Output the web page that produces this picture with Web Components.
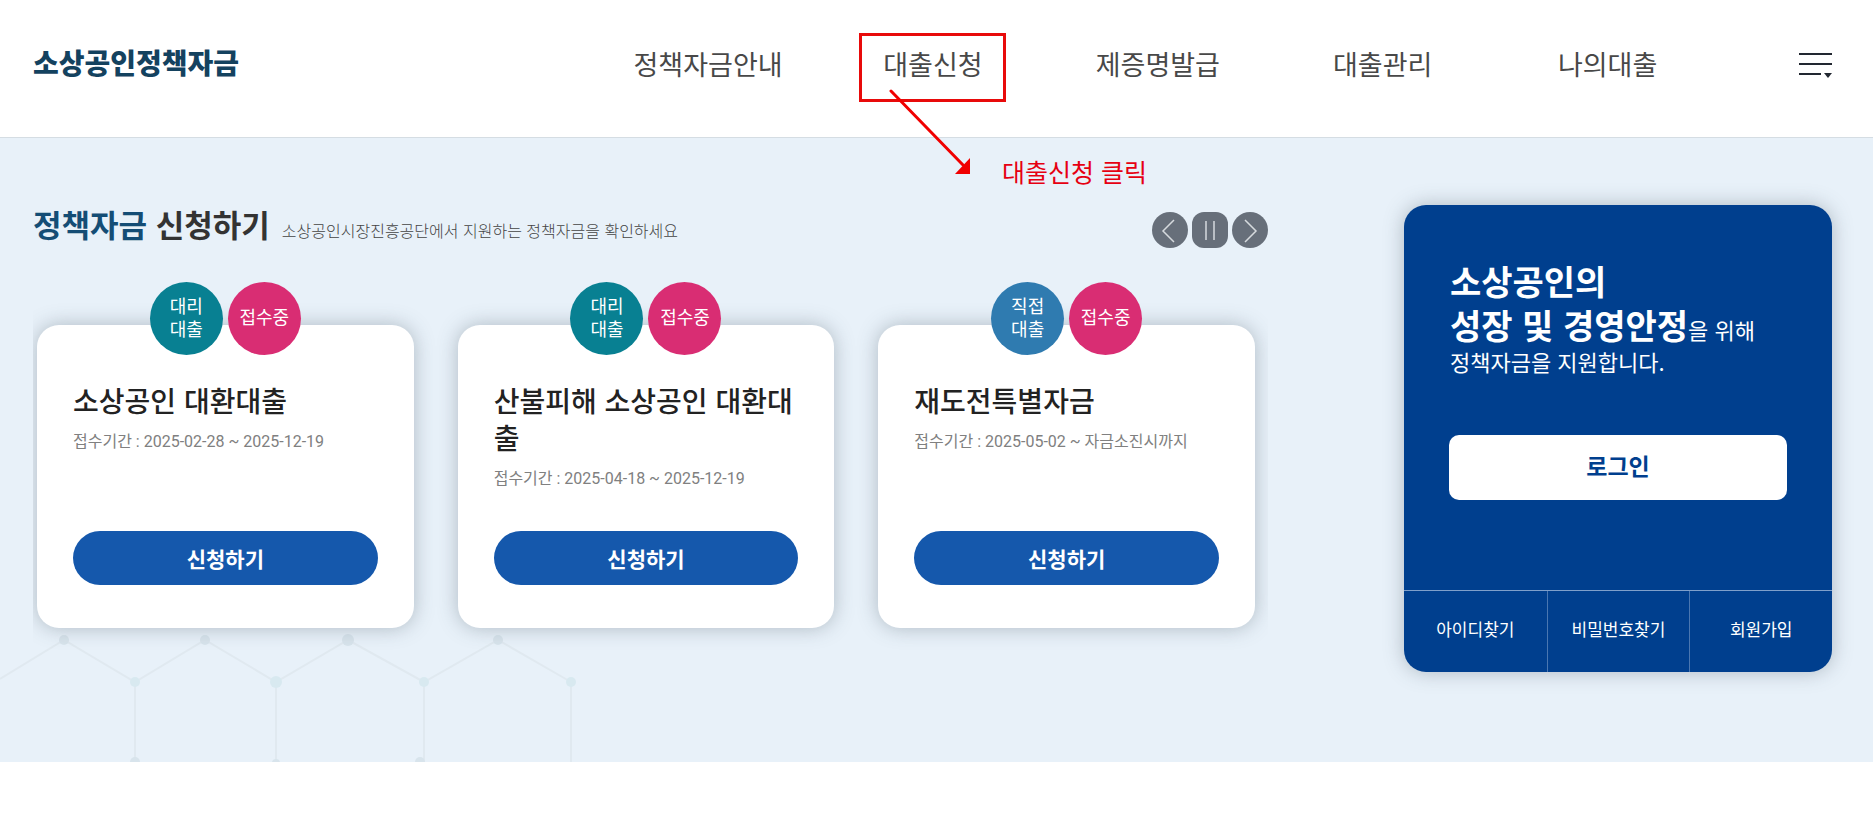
<!DOCTYPE html>
<html lang="ko">
<head>
<meta charset="utf-8">
<meta name="viewport" content="width=device-width, initial-scale=1">
<title>소상공인정책자금</title>
<style>
	body {
		margin: 0;
		background: #fff;
		color: #222;
		font-family: "Noto Sans CJK KR", "Noto Sans", sans-serif;
	}
</style>
</head>
<body>
<site-header>
	<nav-item>정책자금안내</nav-item>
	<nav-item>대출신청<click-callout slot="callout">대출신청 클릭</click-callout></nav-item>
	<nav-item>제증명발급</nav-item>
	<nav-item>대출관리</nav-item>
	<nav-item>나의대출</nav-item>
</site-header>
<main-visual>
	<fund-slider>
		<fund-card kind="대리 대출" period="2025-02-28 ~ 2025-12-19">소상공인 대환대출</fund-card>
		<fund-card kind="대리 대출" period="2025-04-18 ~ 2025-12-19">산불피해 소상공인 대환대출</fund-card>
		<fund-card kind="직접 대출" color="#2f7bb0" period="2025-05-02 ~ 자금소진시까지">재도전특별자금</fund-card>
	</fund-slider>
	<login-box slot="side"></login-box>
</main-visual>

<script>
class SiteHeader extends HTMLElement {
    constructor() {
        super();
        const shadowRoot = this.attachShadow({ mode: 'open' });
        shadowRoot.innerHTML = `
			<style>
				:host {
					display: block;
					border-bottom: 1px solid #d5dde3;
				}
				header {
					display: flex;
					align-items: center;
					box-sizing: border-box;
					min-height: 137px;
					padding: 0 41px 10px 33px;
				}
				.logo {
					padding-bottom: 4px;
					color: #14425f;
					font-size: 28px;
					font-weight: 900;
					line-height: 40px;
					text-decoration: none;
				}
				nav {
					display: grid;
					grid-template-columns: repeat(5, minmax(0, 1fr));
					flex: none;
					width: 62.5%;
					margin-left: auto;
				}
				button {
					margin: 0 0 0 79px;
					padding: 2px 0 0;
					border: 0;
					background: none;
					line-height: 0;
					cursor: pointer;
				}
			</style>
			<header>
				<a class="logo" href="#">소상공인정책자금</a>
				<nav><slot></slot></nav>
				<button type="button" aria-label="전체메뉴">
					<svg width="33" height="26" viewBox="0 0 33 26" fill="#222831">
						<rect y="1" width="33" height="2"/>
						<rect y="11" width="33" height="2"/>
						<rect y="21" width="22" height="2"/>
						<path d="M25 21h8l-4 5z"/>
					</svg>
				</button>
			</header>
    `
    }
}

class NavItem extends HTMLElement {
    constructor() {
        super();
        const shadowRoot = this.attachShadow({ mode: 'open' });
        shadowRoot.innerHTML = `
			<style>
				:host {
					display: block;
					position: relative;
					text-align: center;
				}
				a {
					color: #484848;
					font-size: 27px;
					line-height: 40px;
					text-decoration: none;
				}
			</style>
			<a href="#"><slot></slot></a>
			<slot name="callout"></slot>
    `
    }
}

// red frame round a menu item, with an arrow down to the note
class ClickCallout extends HTMLElement {
    constructor() {
        super();
        const shadowRoot = this.attachShadow({ mode: 'open' });
        shadowRoot.innerHTML = `
			<style>
				:host {
					position: absolute;
					z-index: 2;
					top: -11px;
					left: 50%;
					margin-left: -74px;
					color: #e60012;
					pointer-events: none;
				}
				.frame {
					box-sizing: border-box;
					width: 147px;
					height: 69px;
					border: 3px solid #e80a0a;
				}
				svg {
					position: absolute;
					top: 56px;
					left: 30px;
				}
				.note {
					position: absolute;
					top: 120px;
					left: 143px;
					font-size: 25px;
					line-height: 36px;
					white-space: nowrap;
				}
			</style>
			<div class="frame"></div>
			<svg width="84" height="86" viewBox="0 0 84 86">
				<path d="M2 2L74 76" stroke="#f00000" stroke-width="3" stroke-linecap="round"/>
				<path d="M81 69v16H66z" fill="#f00000"/>
			</svg>
			<div class="note"><slot></slot></div>
    `
    }
}

class MainVisual extends HTMLElement {
    constructor() {
        super();
        const shadowRoot = this.attachShadow({ mode: 'open' });
        shadowRoot.innerHTML = `
			<style>
				:host {
					display: block;
					position: relative;
					background: #e8f1f9;
				}
				.pattern {
					position: absolute;
					left: 0;
					bottom: 0;
				}
				main {
					display: grid;
					grid-template-columns: minmax(0, 1fr) 428px;
					column-gap: 136px;
					align-items: start;
					position: relative;
					padding: 67px 41px 90px 33px;
				}
			</style>
			<svg class="pattern" width="590" height="132" viewBox="0 0 590 132">
				<g fill="none" stroke="#e0e9f0" stroke-width="2">
					<path d="M0 49L64 10L135 52L205 10L276 52L348 10L424 52L498 10L571 52"/>
					<path d="M135 52V132M276 52V132M424 52V132M571 52V132"/>
				</g>
				<g fill="#d8e4ec">
					<circle cx="64" cy="10" r="5"/><circle cx="205" cy="10" r="5"/>
					<circle cx="348" cy="10" r="6"/><circle cx="498" cy="10" r="5"/>
					<circle cx="135" cy="132" r="5"/><circle cx="276" cy="133" r="4"/>
					<circle cx="420" cy="132" r="5"/>
				</g>
				<g fill="#d8e9f0">
					<circle cx="135" cy="52" r="5"/><circle cx="276" cy="52" r="6"/>
					<circle cx="424" cy="52" r="5"/><circle cx="571" cy="52" r="5"/>
				</g>
			</svg>
			<main>
				<slot></slot>
				<slot name="side"></slot>
			</main>
    `
    }
}

class FundSlider extends HTMLElement {
    constructor() {
        super();
        const shadowRoot = this.attachShadow({ mode: 'open' });
        shadowRoot.innerHTML = `
			<style>
				:host {
					display: block;
				}
				.head {
					display: flex;
					align-items: center;
					padding-top: 7px;
				}
				.title {
					display: flex;
					align-items: baseline;
					gap: 12px;
					height: 36px;
					flex: 1;
					white-space: nowrap;
				}
				h2 {
					margin: 0;
					color: #333;
					font-size: 31px;
					line-height: 24px;
				}
				h2 em {
					color: #144d75;
					font-style: normal;
				}
				p {
					margin: 0;
					color: #444;
					font-size: 16px;
					font-weight: 300;
					line-height: 24px;
				}
				.controls {
					display: flex;
					gap: 4px;
				}
				button {
					width: 36px;
					height: 36px;
					padding: 0;
					border: 0;
					border-radius: 50%;
					background: #676f7a;
					line-height: 0;
					cursor: pointer;
				}
				button.pause {
					border-radius: 12px;
				}
				button svg {
					fill: none;
					stroke: #d6dade;
					stroke-width: 1.5;
				}
				.list {
					display: grid;
					grid-template-columns: repeat(3, minmax(0, 1fr));
					gap: 44px;
					overflow: hidden;
					padding: 77px 13px 30px 4px;
				}
			</style>
			<div class="head">
				<div class="title">
					<h2><em>정책자금</em> 신청하기</h2>
					<p>소상공인시장진흥공단에서 지원하는 정책자금을 확인하세요</p>
				</div>
				<div class="controls">
					<button type="button" aria-label="이전"><svg width="36" height="36" viewBox="0 0 36 36"><path d="M22 8L11 19L22 30"/></svg></button>
					<button type="button" class="pause" aria-label="정지"><svg width="36" height="36" viewBox="0 0 36 36"><path d="M14 9V28M22 9V28"/></svg></button>
					<button type="button" aria-label="다음"><svg width="36" height="36" viewBox="0 0 36 36"><path d="M13 8L24 19L13 30"/></svg></button>
				</div>
			</div>
			<div class="list"><slot></slot></div>
    `
    }
}

class FundCard extends HTMLElement {
    constructor() {
        super();
        let el = this;
        el.kind = el.getAttribute('kind').split(' ').join('<br>');
        el.color = el.getAttribute('color') || '#088092';
        el.period = el.getAttribute('period');
        const shadowRoot = el.attachShadow({ mode: 'open' });
        shadowRoot.innerHTML = `
			<style>
				:host {
					display: flex;
					flex-direction: column;
					position: relative;
					box-sizing: border-box;
					min-height: 303px;
					padding: 57px 36px 43px;
					border-radius: 22px;
					background: #fff;
					box-shadow: 0 0 20px rgba(70, 85, 100, .36);
				}
				.badges {
					display: flex;
					justify-content: center;
					gap: 5px;
					position: absolute;
					top: -43px;
					left: 0;
					right: 0;
				}
				.badges span {
					display: flex;
					align-items: center;
					justify-content: center;
					box-sizing: border-box;
					width: 73px;
					height: 73px;
					padding-bottom: 4px;
					border-radius: 50%;
					background: #d92d73;
					color: #fff;
					font-size: 18px;
					line-height: 23px;
				}
				.badges .kind {
					background: ${el.color};
				}
				h3 {
					margin: 0;
					color: #222;
					font-size: 28px;
					font-weight: 500;
					line-height: 37px;
				}
				p {
					margin: 11px 0 0;
					color: #808080;
					font-family: Roboto, "Noto Sans CJK KR", sans-serif;
					font-size: 16px;
					line-height: 24px;
				}
				button {
					height: 54px;
					margin-top: auto;
					padding: 0;
					border: 0;
					border-radius: 27px;
					background: #1558ac;
					color: #fff;
					font: 700 21px/54px "Noto Sans CJK KR", sans-serif;
					cursor: pointer;
				}
			</style>
			<div class="badges"><span class="kind">${el.kind}</span><span>접수중</span></div>
			<h3><slot></slot></h3>
			<p>접수기간 : ${el.period}</p>
			<button type="button">신청하기</button>
    `
    }
}

class LoginBox extends HTMLElement {
    constructor() {
        super();
        const shadowRoot = this.attachShadow({ mode: 'open' });
        shadowRoot.innerHTML = `
			<style>
				:host {
					display: block;
					overflow: hidden;
					border-radius: 22px;
					background: #003f8e;
					box-shadow: 0 0 20px rgba(70, 85, 100, .36);
					color: #fff;
				}
				.top {
					padding: 54px 45px 90px;
				}
				p {
					margin: 0;
					padding-left: 1px;
					font-size: 22px;
					line-height: 28px;
					white-space: nowrap;
				}
				strong {
					font-size: 34px;
					line-height: 44px;
				}
				button {
					display: block;
					width: 100%;
					height: 65px;
					margin-top: 60px;
					padding: 0 0 6px;
					border: 0;
					border-radius: 10px;
					background: #fff;
					color: #003f8e;
					font: 700 23px/36px "Noto Sans CJK KR", sans-serif;
					cursor: pointer;
				}
				.links {
					display: grid;
					grid-template-columns: repeat(3, 1fr);
					border-top: 1px solid #7fa0cb;
				}
				.links a {
					padding: 23px 0 28px;
					color: #fff;
					font-size: 17px;
					line-height: 30px;
					text-align: center;
					text-decoration: none;
				}
				.links a + a {
					border-left: 1px solid #4a77b1;
				}
			</style>
			<div class="top">
				<p><strong>소상공인의<br>성장 및 경영안정</strong>을 위해<br>정책자금을 지원합니다.</p>
				<button type="button">로그인</button>
			</div>
			<div class="links">
				<a href="#">아이디찾기</a>
				<a href="#">비밀번호찾기</a>
				<a href="#">회원가입</a>
			</div>
    `
    }
}

window.customElements.define('site-header', SiteHeader);
window.customElements.define('nav-item', NavItem);
window.customElements.define('click-callout', ClickCallout);
window.customElements.define('main-visual', MainVisual);
window.customElements.define('fund-slider', FundSlider);
window.customElements.define('fund-card', FundCard);
window.customElements.define('login-box', LoginBox);
</script>
</body>
</html>
